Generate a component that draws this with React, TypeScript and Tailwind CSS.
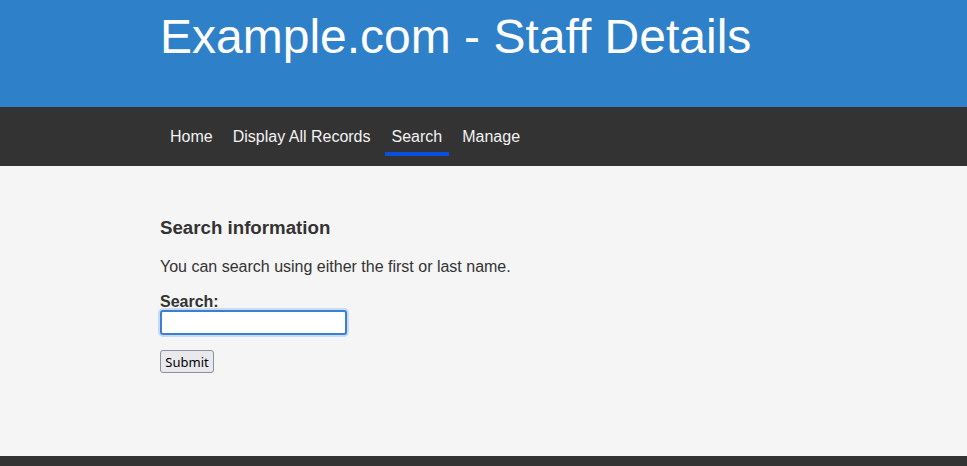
export default function App() {
  const links = ["Home", "Display All Records", "Search", "Manage"]
  const active = "Search"

  return (
    <div className="min-h-[466px] flex flex-col bg-[#f5f5f5] font-['Liberation_Sans',Arial,sans-serif] text-[#333333]">
      <header className="bg-[#2e81c8] h-[107px] pl-[160px] pt-[9px]">
        <h1 className="text-white text-[48px] leading-[56px] font-normal">Example.com - Staff Details</h1>
      </header>

      <nav className="bg-[#333333] h-[59px] pl-[160px] flex items-stretch">
        {links.map((l) => (
          <a
            key={l}
            href="#"
            className={
              "relative text-[#f2f2f2] text-[16px] pt-[21px] leading-[18px] " +
              (l === active ? "pl-[11px] pr-[10px]" : "px-[10px]")
            }
          >
            {l}
            {l === active && (
              <span className="absolute left-[4px] right-[3px] bottom-[10px] h-[4px] bg-[#0b4fdf]" />
            )}
          </a>
        ))}
      </nav>

      <main className="flex-1 pl-[160px] pt-[51px] pb-[60px]">
        <h2 className="text-[18.7px] font-bold leading-[22px]">Search information</h2>
        <p className="text-[16px] mt-[19px] leading-[18px]">You can search using either the first or last name.</p>
        <form className="mt-[17px]" onSubmit={(e) => e.preventDefault()}>
          <label className="block font-bold text-[16px] leading-[18px]">Search:</label>
          <input
            autoFocus
            type="text"
            className="block w-[187px] h-[25px] -mt-[1px] bg-white border-2 border-[#3b7fd0] rounded-[3px] outline-none shadow-[0_0_0_2px_#c7dcf3] px-1 text-[13px]"
          />
          <button
            type="submit"
            className="mt-[15px] w-[54px] h-[23px] text-[13px] leading-[16px] font-['Noto_Sans',sans-serif] text-black bg-[#e9e9ed] border border-[#8f8f9d] rounded-[3px]"
          >
            Submit
          </button>
        </form>
      </main>

      <footer className="bg-[#333333] h-[10px]" />
    </div>
  )
}
